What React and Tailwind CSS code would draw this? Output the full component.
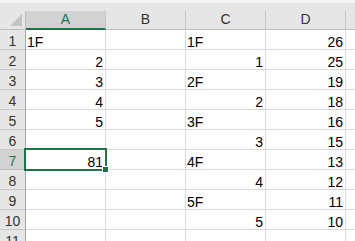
const COLS = ["A", "B", "C", "D"];

const ROWS = [
  { a: "1F", c: "1F", d: 26 },
  { a: 2, c: 1, d: 25 },
  { a: 3, c: "2F", d: 19 },
  { a: 4, c: 2, d: 18 },
  { a: 5, c: "3F", d: 16 },
  { a: "", c: 3, d: 15 },
  { a: 81, c: "4F", d: 13 },
  { a: "", c: 4, d: 12 },
  { a: "", c: "5F", d: 11 },
  { a: "", c: 5, d: 10 },
  { a: "", c: "", d: "" },
];

const SELECTED_ROW = 7;

function Cell({ value, selected }) {
  const isNumber = typeof value === "number";
  return (
    <div
      className={`relative h-[20px] border-r border-b border-[#dadada] leading-[19px] pt-[3px] whitespace-nowrap ${
        isNumber ? "text-right pr-[2px]" : "text-left pl-px"
      } ${selected ? "z-10" : ""}`}
    >
      {value}
      {selected && (
        <div className="absolute -left-[2px] -top-[2px] w-[83px] h-[23px] border-2 border-[#217346]">
          <div className="absolute -right-[4px] -bottom-[4px] w-[7px] h-[7px] bg-[#217346] border border-white" />
        </div>
      )}
    </div>
  );
}

export default function App() {
  return (
    <div
      className="w-[355px] h-[241px] overflow-hidden bg-white text-[14px] text-black"
      style={{ fontFamily: '"Liberation Sans", Arial, sans-serif' }}
    >
      <div className="h-[11px] bg-[#e6e6e6]">
        <div className="h-[3px] bg-[#f3f3f3]" />
      </div>

      <div className="grid grid-cols-[26px_80px_80px_80px_80px_1fr]">
        <div className="relative h-[19px] bg-[#e6e6e6] border-r border-b border-[#bdbdbd]">
          <div className="absolute right-[3px] bottom-[3px] w-0 h-0 border-l-[12px] border-l-transparent border-b-[12px] border-b-[#c3c3c3]" />
        </div>
        {COLS.map((col) => (
          <div
            key={col}
            className={`h-[19px] border-r border-[#c6c6c6] text-center leading-[17px] ${
              col === "A"
                ? "bg-[#d2d2d2] border-b-2 border-b-[#217346] text-[#217346]"
                : "bg-[#e6e6e6] border-b border-b-[#bdbdbd] text-[#333]"
            }`}
          >
            {col}
          </div>
        ))}
        <div className="h-[19px] bg-[#e6e6e6] border-b border-[#bdbdbd]" />

        {ROWS.map((row, i) => {
          const n = i + 1;
          const sel = n === SELECTED_ROW;
          return [
            <div
              key={`h${n}`}
              className={`h-[20px] border-b border-r text-center leading-[19px] pt-[2px] ${
                sel
                  ? "bg-[#d2d2d2] border-b-[#bdbdbd] border-r-[#217346] text-[#217346]"
                  : "bg-[#e6e6e6] border-b-[#c6c6c6] border-r-[#a6a6a6] text-[#333]"
              }`}
            >
              {n}
            </div>,
            <Cell key={`a${n}`} value={row.a} selected={sel} />,
            <Cell key={`b${n}`} value="" />,
            <Cell key={`c${n}`} value={row.c} />,
            <Cell key={`d${n}`} value={row.d} />,
            <div key={`e${n}`} className="h-[20px] border-b border-[#dadada]" />,
          ];
        })}
      </div>
    </div>
  );
}
